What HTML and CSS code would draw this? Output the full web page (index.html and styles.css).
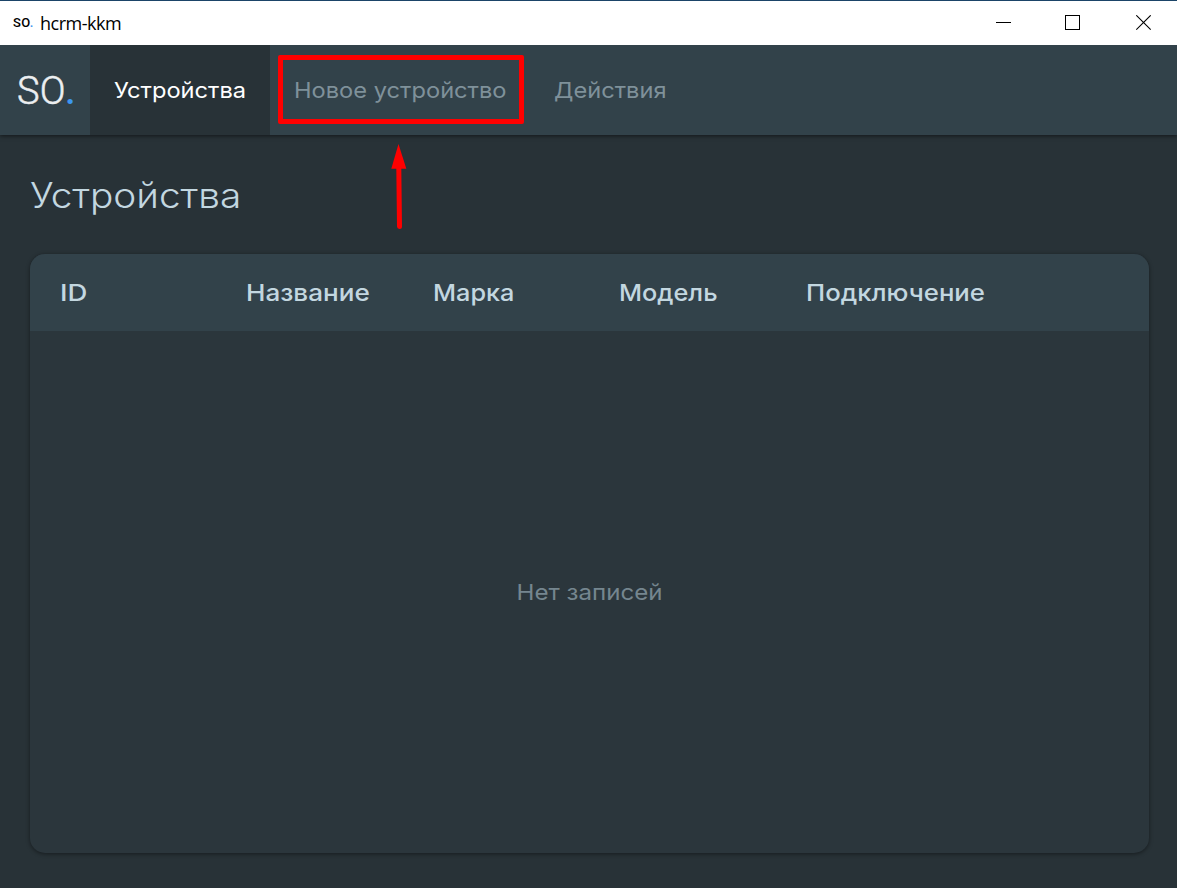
FILE: index.html
```html
<!DOCTYPE html>
<html lang="ru">
<head>
<meta charset="utf-8">
<title>hcrm-kkm</title>
<link rel="stylesheet" href="styles.css">
</head>
<body>
<div class="window">
  <header class="titlebar">
    <span class="app-icon">SO<i class="dot">.</i></span>
    <span class="app-name">hcrm-kkm</span>
    <div class="controls">
      <svg width="16" height="16" viewBox="0 0 16 16" shape-rendering="crispEdges"><path d="M0 7.5H15" stroke="#000"/></svg>
      <svg width="16" height="16" viewBox="0 0 16 16" shape-rendering="crispEdges"><rect x=".5" y=".5" width="14" height="14" fill="none" stroke="#000"/></svg>
      <svg width="16" height="16" viewBox="0 0 16 16"><path d="M.3 .3L14.7 14.7M14.7 .3L.3 14.7" stroke="#000" stroke-width="1.1"/></svg>
    </div>
  </header>
  <nav class="nav">
    <div class="logo">SO<span class="dot">.</span></div>
    <a class="tab tab-active"><span class="wide">Устройства</span></a>
    <a class="tab tab-new"><span class="wide">Новое устройство</span></a>
    <a class="tab tab-actions"><span class="wide">Действия</span></a>
  </nav>
  <main class="content">
    <h1 class="title"><span class="wide">Устройства</span></h1>
    <section class="table">
      <div class="table-head">
        <span class="wide h-id">ID</span><span class="wide h-name">Название</span><span class="wide h-brand">Марка</span><span class="wide h-model">Модель</span><span class="wide h-conn">Подключение</span>
      </div>
      <div class="table-body"><span class="wide empty">Нет записей</span></div>
    </section>
  </main>
  <div class="highlight"></div>
  <svg class="arrow" width="18" height="90" viewBox="0 0 18 90"><path d="M8.5 3L16.3 27.8H1.3Z" fill="#f00"/><path d="M8.8 27L9.5 85.5" stroke="#f00" stroke-width="5" stroke-linecap="round"/></svg>
</div>
</body>
</html>
```
FILE: styles.css
```css
* { box-sizing: border-box; }
body { margin: 0; overflow: hidden; }
.window {
  position: relative;
  display: flex;
  flex-direction: column;
  width: 1177px;
  height: 888px;
  background: #283237;
  font-family: Inter, "Open Sans", sans-serif;
}
.titlebar {
  display: flex;
  align-items: center;
  flex: 0 0 45px;
  padding: 0 25px 0 13px;
  border-top: 1px solid #1b4468;
  background: #fff;
  color: #000;
  z-index: 2;
}
.app-icon { width: 27px; font: 500 13px/16px Roboto, sans-serif; letter-spacing: .3px; }
.dot { color: #3c96f0; font-style: normal; }
.app-name { font: 18px/24px "Open Sans", sans-serif; letter-spacing: -.5px; }
.controls { display: flex; margin-left: auto; }
.controls svg { margin-left: 55px; }
.controls svg:nth-child(2) { margin-left: 53px; }
.nav {
  display: flex;
  flex: 0 0 90px;
  height: 90px;
  background: #32424a;
  box-shadow: 0 1px 4px rgba(0, 0, 0, .55);
  z-index: 1;
}
.logo {
  width: 90px;
  height: 90px;
  padding-left: 17px;
  font: 300 38px/93px Roboto, sans-serif;
  letter-spacing: .3px;
  color: #eceff1;
  -webkit-text-stroke: .5px #eceff1;
}
.logo .dot { margin-left: -1px; font-weight: 500; -webkit-text-stroke: 0; }
.wide {
  display: inline-block;
  transform: scaleX(1.075);
  transform-origin: left;
}
.tab {
  padding-left: 24px;
  font-size: 22px;
  line-height: 90px;
  white-space: nowrap;
  color: #7f919a;
}
.tab-active { width: 180px; background: #283237; color: #fff; }
.tab-new { width: 260px; }
.content {
  display: flex;
  flex: 1;
  flex-direction: column;
  padding: 30px 28px 35px 30px;
}
.title {
  height: 89px;
  margin: 0;
  font-size: 35px;
  font-weight: 350;
  line-height: 60px;
  color: #c3d7e0;
}
.title .wide { transform: scaleX(1.108); }
.table {
  flex: 1;
  display: flex;
  flex-direction: column;
  overflow: hidden;
  border-radius: 15px;
  background: #2b363c;
  box-shadow: 0 1px 4px rgba(0, 0, 0, .45);
}
.table-head {
  display: grid;
  grid-template-columns: repeat(5, 186.4px);
  flex: 0 0 77px;
  height: 77px;
  padding-left: 30px;
  background: #32424a;
  color: #c3d7e0;
  font-size: 23.5px;
  font-weight: 500;
  line-height: 77px;
}
.wide.h-id { transform: scaleX(1.17); }
.wide.h-name { transform: scaleX(1.11); }
.wide.h-conn { transform: scaleX(1.095); }
.table-body {
  display: flex;
  flex: 1;
  align-items: center;
  justify-content: center;
  color: #75868f;
  font-size: 22px;
}
.wide.empty { transform: scaleX(1.097); transform-origin: center; }
.highlight {
  position: absolute;
  left: 278px;
  top: 55px;
  width: 246px;
  height: 69px;
  border: 5px solid #f00;
  border-radius: 2px;
  z-index: 2;
}
.arrow { position: absolute; left: 390px; top: 141px; z-index: 2; }
```
